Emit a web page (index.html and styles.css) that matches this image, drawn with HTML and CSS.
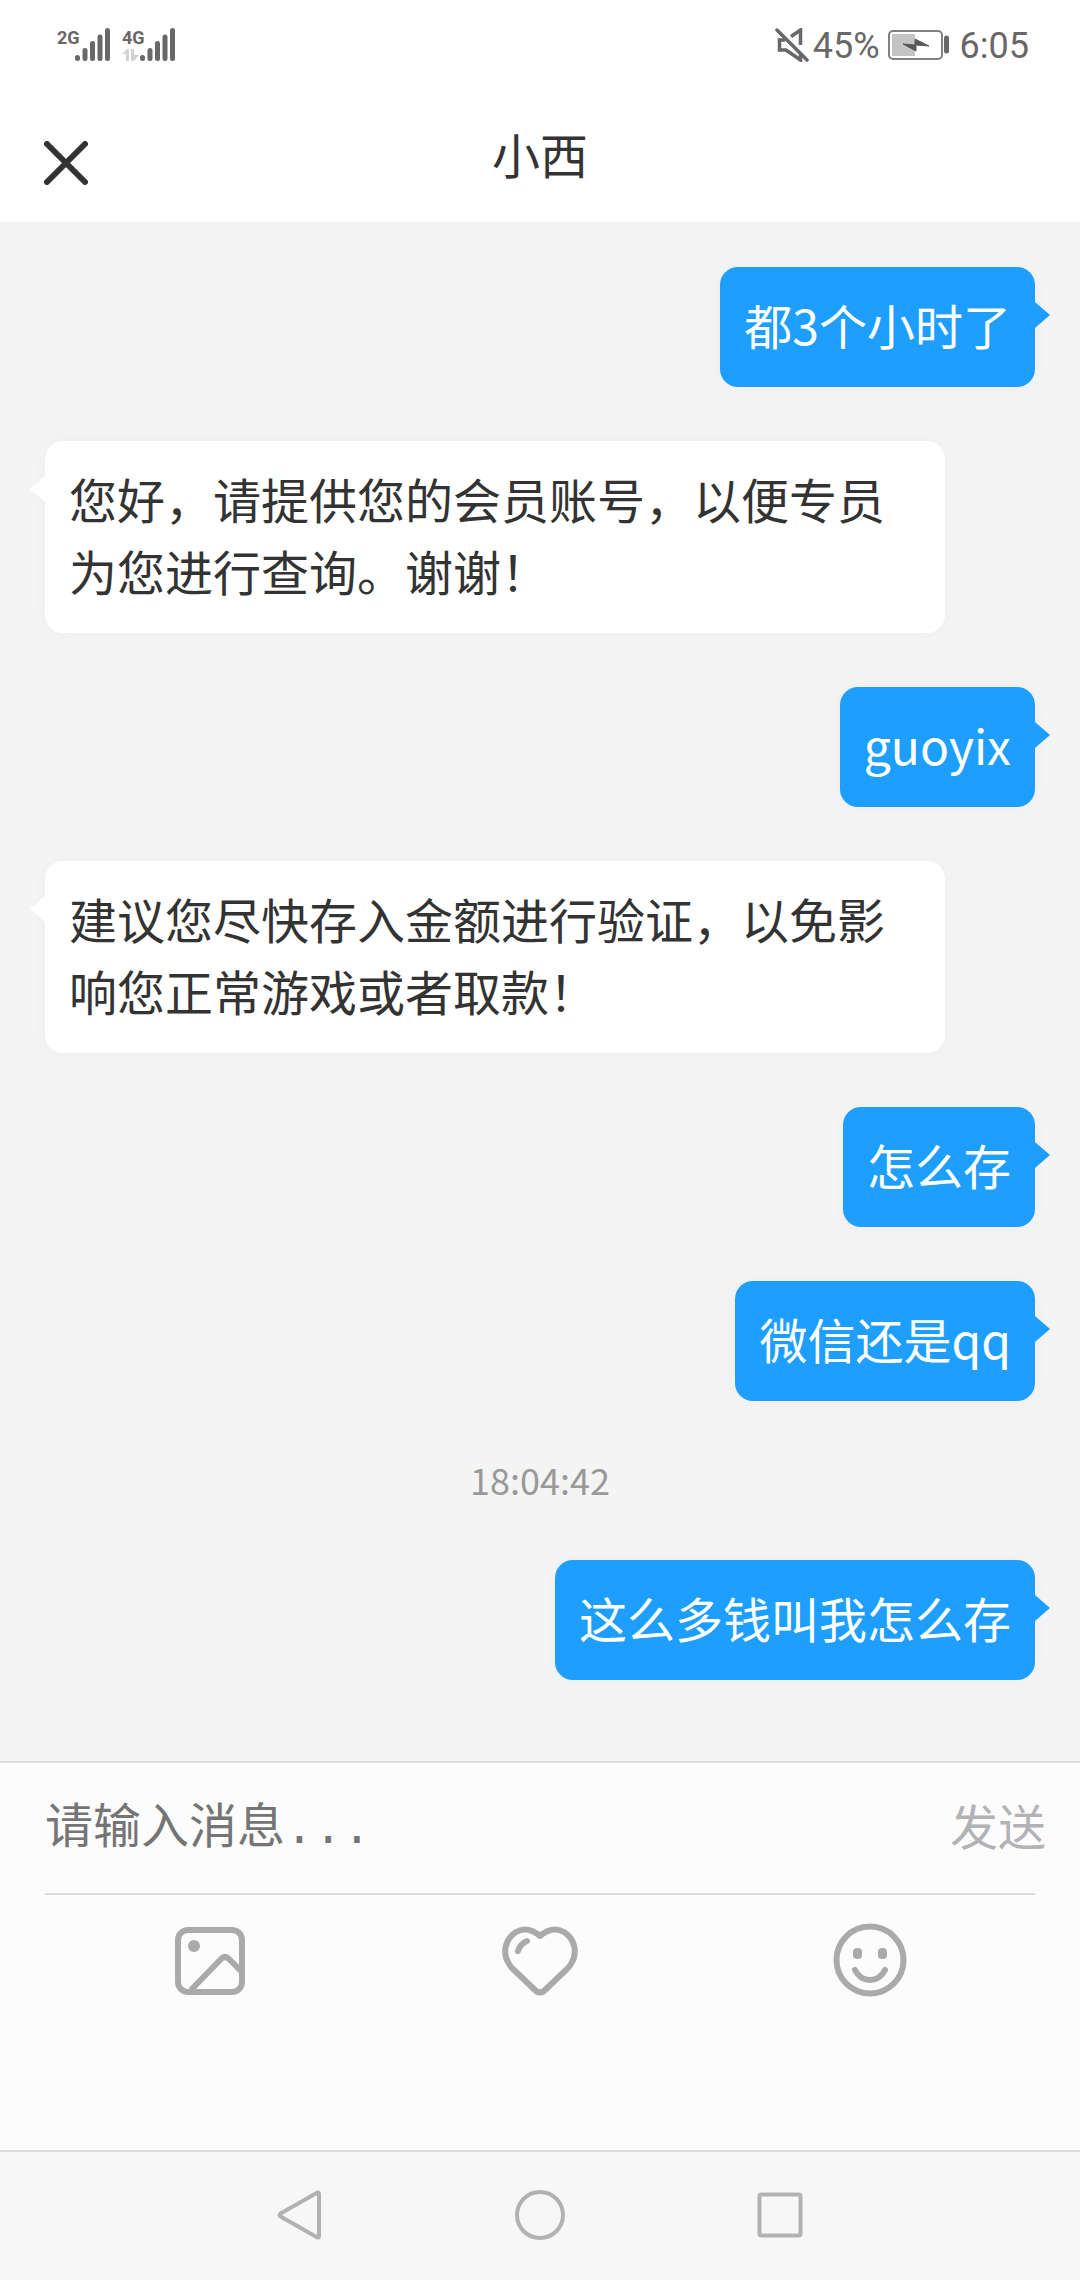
FILE: index.html
```html
<!DOCTYPE html>
<html lang="zh-CN">
<head>
<meta charset="utf-8">
<meta name="viewport" content="width=device-width, initial-scale=1">
<title>小西</title>
<link rel="stylesheet" href="styles.css">
</head>
<body>
<div class="app">
  <div class="status">
    <div class="status-side">
      <div class="signal">
        <div class="network"><span>2G</span></div>
        <svg width="35" height="34" viewBox="0 0 35 34" stroke="#686868" stroke-width="5" stroke-linecap="round" aria-hidden="true"><path d="M2.500 29.500v1M10 22.500v8M17.500 15.500v15M25 9v21.500M32.500 2.500v28"/></svg>
      </div>
      <div class="signal">
        <div class="network"><span>4G</span>
          <svg width="18" height="14" viewBox="0 0 18 14" fill="#d2d2d2" aria-hidden="true"><path d="M0 6 5 1h2v12H4V6zM9 1h3v6h5l-5 6H9z"/></svg>
        </div>
        <svg width="35" height="34" viewBox="0 0 35 34" stroke="#686868" stroke-width="5" stroke-linecap="round" aria-hidden="true"><path d="M2.500 29.500v1M10 22.500v8M17.500 15.500v15M25 9v21.500M32.500 2.500v28"/></svg>
      </div>
    </div>
    <div class="status-side">
      <svg class="mute" width="34" height="34" viewBox="0 0 34 34" fill="none" stroke="#686868" stroke-width="3.500" aria-hidden="true"><path d="M2 2 32 32" stroke-linecap="round"/><path d="M16 8.500 25.500 2v15"/><path d="M10 12H4.500v10H11l14.500 10v-6"/></svg>
      <span class="reading">45%</span>
      <svg class="battery" width="62" height="30" viewBox="0 0 62 30" aria-hidden="true"><rect x="1" y="1" width="53" height="28" rx="4" fill="none" stroke="#808080" stroke-width="2"/><path d="M4 4h23v22H4z" fill="#c4c4c4"/><path d="m15 14 12 1V9l14 7-13-1v6z" fill="#585858" stroke="#585858" stroke-width="1"/><path d="M58.500 8v13" stroke="#686868" stroke-width="5" stroke-linecap="round"/></svg>
      <span class="reading">6:05</span>
    </div>
  </div>

  <header class="header">
    <button class="close" type="button" aria-label="关闭"><svg width="44" height="44" viewBox="0 0 44 44" fill="none" stroke="#333" stroke-width="6" stroke-linecap="round"><path d="M3 3l38 38M41 3 3 41"/></svg></button>
    <h1 class="title">小西</h1>
  </header>

  <main class="messages">
    <p class="bubble sent">都3个小时了</p>
    <p class="bubble received">您好，请提供您的会员账号，以便专员为您进行查询。谢谢！</p>
    <p class="bubble sent">guoyix</p>
    <p class="bubble received">建议您尽快存入金额进行验证，以免影响您正常游戏或者取款！</p>
    <p class="bubble sent">怎么存</p>
    <p class="bubble sent">微信还是qq</p>
    <time class="time">18:04:42</time>
    <p class="bubble sent">这么多钱叫我怎么存</p>
  </main>

  <form class="composer">
    <div class="entry">
      <input class="field" type="text" placeholder="请输入消息..." aria-label="消息">
      <button class="send" type="button">发送</button>
    </div>
    <div class="tools">
      <button type="button" aria-label="图片"><svg width="76" height="76" viewBox="0 0 76 76" fill="none" stroke="#aaa" stroke-width="6"><rect x="6" y="7" width="64" height="62" rx="10"/><path d="M19 67 49 36q4-4 8 0l13 13"/><circle cx="22" cy="23" r="6" fill="#aaa" stroke="none"/></svg></button>
      <button type="button" aria-label="收藏"><svg width="76" height="76" viewBox="0 0 76 76" fill="none" stroke="#aaa" stroke-width="6" stroke-linecap="round" stroke-linejoin="round"><path d="M38 13C31 7 23 4 14 9 3 16 0 30 7 41 8 43 9 44 11 46L34 68q4 3 8 0L65 46C67 44 68 43 69 41 76 30 73 16 62 9 53 4 45 7 38 13Z"/><path d="M16 28q2-7 9-10"/></svg></button>
      <button type="button" aria-label="表情"><svg width="76" height="76" viewBox="0 0 76 76" fill="none" stroke="#aaa" stroke-width="6" stroke-linecap="round"><circle cx="38" cy="37" r="33.500"/><path d="M23 47q5 10 15 10t15-10"/><g fill="#aaa" stroke="none"><rect x="21" y="25" width="9" height="11" rx="4"/><rect x="46" y="25" width="9" height="11" rx="4"/></g></svg></button>
    </div>
  </form>

  <nav class="system">
    <button type="button" aria-label="返回"><svg width="50" height="52" viewBox="0 0 50 52" fill="none" stroke="#b2b2b2" stroke-width="4" stroke-linejoin="round"><path d="M5.500 24.500Q3.500 26 5.500 27.500L42.500 48.500Q44 49 44 47V5Q44 3 42.500 3.500Z"/></svg></button>
    <button type="button" aria-label="主屏幕"><svg width="50" height="52" viewBox="0 0 50 52" fill="none" stroke="#b2b2b2" stroke-width="4"><circle cx="25" cy="26" r="23"/></svg></button>
    <button type="button" aria-label="最近任务"><svg width="50" height="52" viewBox="0 0 50 52" fill="none" stroke="#b2b2b2" stroke-width="4"><rect x="4.500" y="5.500" width="41" height="41" rx="2"/></svg></button>
  </nav>
</div>
</body>
</html>
```

FILE: styles.css
```css
* {
  box-sizing: border-box;
}

body {
  margin: 0;
  background: #f4f4f4;
  color: #333;
  font-family: "Noto Sans CJK SC", sans-serif;
  font-size: 48px;
  line-height: 72px;
}

button {
  padding: 0;
  border: 0;
  background: none;
  color: inherit;
  font: inherit;
}

svg {
  display: block;
  flex: none;
}

.app {
  display: flex;
  flex-direction: column;
  min-height: 100vh;
}

.status {
  display: flex;
  justify-content: space-between;
  height: 90px;
  padding: 0 51px 0 57px;
  background: #fff;
  color: #686868;
  font: 36px/90px Roboto, sans-serif;
}

.status-side {
  display: flex;
  align-items: center;
}

.signal {
  display: flex;
  margin-right: 12px;
}

.network {
  width: 18px;
  font: bold 18px/20px Roboto, sans-serif;
}

.reading {
  padding-top: 2px;
}

.mute {
  margin-right: 4px;
}

.battery {
  margin: 0 10px 0 8px;
}

.header {
  display: grid;
  grid-template-columns: 44px 1fr 44px;
  align-items: center;
  height: 132px;
  padding: 0 44px 6px;
  background: #fff;
}

.close {
  margin-top: 20px;
}

.title {
  margin: 0;
  font-size: 48px;
  font-weight: 400;
  text-align: center;
}

.messages {
  display: flex;
  flex: 1;
  flex-direction: column;
  align-items: flex-start;
  gap: 54px;
  padding: 45px 45px 81px;
}

.bubble {
  position: relative;
  max-width: calc(100% - 90px);
  margin: 0;
  padding: 21px 24px 27px;
  border-radius: 18px;
  box-shadow: 0 0 18px rgba(0, 0, 0, 0.03);
}

.bubble::after {
  content: "";
  position: absolute;
  top: 35px;
  border: 13px solid transparent;
}

.received {
  background: #fff;
}

.received::after {
  right: 100%;
  border-right: 15px solid #fff;
  border-left: 0;
}

.sent {
  align-self: flex-end;
  background: #1e9fff;
  color: #fff;
}

.sent::after {
  left: 100%;
  border-right: 0;
  border-left: 15px solid #1e9fff;
}

.time {
  align-self: center;
  padding-bottom: 3px;
  color: #999;
  font-size: 36px;
  line-height: 48px;
}

.composer {
  min-height: 389px;
  border-top: 2px solid #dcdcdc;
  background: #fcfcfc;
}

.entry {
  display: flex;
  align-items: center;
  height: 130px;
  padding: 0 34px 0 45px;
}

.field {
  flex: 1;
  min-width: 0;
  height: 76px;
  padding: 4px 0 0;
  border: 0;
  outline: 0;
  background: none;
  color: #333;
  font: 48px/72px "Liberation Mono", "Noto Sans CJK SC", monospace;
}

.field::placeholder {
  color: #757575;
  opacity: 1;
}

.send {
  padding-bottom: 8px;
  color: #b2b2b7;
}

.tools {
  display: grid;
  grid-template-columns: repeat(3, 1fr);
  justify-items: center;
  margin: 0 45px;
  padding-top: 28px;
  border-top: 2px solid #dcdcdc;
}

.system {
  display: flex;
  justify-content: center;
  gap: 190px;
  height: 130px;
  padding-bottom: 2px;
  border-top: 2px solid #dcdcdc;
  background: #f7f7f7;
}
```
